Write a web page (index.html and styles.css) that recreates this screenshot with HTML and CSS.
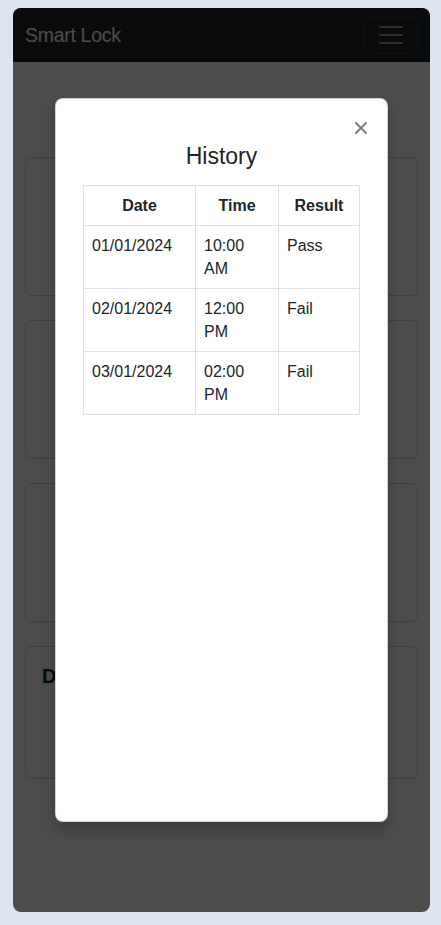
FILE: index.html
```html
<!DOCTYPE html>
<html lang="en">
<head>
<meta charset="utf-8">
<title>Smart Lock</title>
<link rel="stylesheet" href="styles.css">
</head>
<body>
<div class="app">
  <nav class="navbar">
    <span class="brand">Smart Lock</span>
    <button class="toggler" type="button" aria-label="Menu">
      <svg width="30" height="30" viewBox="0 0 30 30"><path d="M4 7h22M4 15h22M4 23h22" stroke="rgba(255,255,255,0.55)" stroke-width="2" stroke-linecap="round"/></svg>
    </button>
  </nav>
  <main class="content">
    <section class="card"></section>
    <section class="card"></section>
    <section class="card"></section>
    <section class="card card-last"><h5 class="card-title">Door Lock</h5></section>
  </main>
  <div class="backdrop">
    <div class="modal">
      <div class="modal-top">
        <button class="close" type="button" aria-label="Close">
          <svg width="12" height="12" viewBox="0 0 12 12"><path d="M1 1L11 11M11 1L1 11" stroke="#000" stroke-width="2" stroke-linecap="square"/></svg>
        </button>
      </div>
      <h4 class="modal-title">History</h4>
      <div class="modal-body">
        <table class="history">
          <colgroup><col class="c-date"><col class="c-time"><col class="c-result"></colgroup>
          <thead>
            <tr><th>Date</th><th>Time</th><th>Result</th></tr>
          </thead>
          <tbody>
            <tr><td>01/01/2024</td><td>10:00 AM</td><td>Pass</td></tr>
            <tr><td>02/01/2024</td><td>12:00 PM</td><td>Fail</td></tr>
            <tr><td>03/01/2024</td><td>02:00 PM</td><td>Fail</td></tr>
          </tbody>
        </table>
      </div>
    </div>
  </div>
</div>
</body>
</html>
```

FILE: styles.css
```css
* { box-sizing: border-box; }
html, body { margin: 0; }
body {
  background: #dce4f0;
  padding: 8px 11px 13px 13px;
  font-family: "Liberation Sans", Arial, sans-serif;
  color: #212529;
}
.app {
  position: relative;
  height: 904px;
  background: #fff;
  border-radius: 8px;
  overflow: hidden;
}
.navbar {
  height: 54px;
  background: #212529;
  display: flex;
  align-items: center;
  justify-content: space-between;
  padding: 0 12px;
}
.brand {
  color: #fff;
  font-size: 19.5px;
  letter-spacing: -0.3px;
}
.toggler {
  width: 54px;
  height: 38px;
  padding: 0;
  background: transparent;
  border: 1px solid rgba(255,255,255,0.1);
  border-radius: 6px;
  display: flex;
  align-items: center;
  justify-content: center;
}
.toggler svg { display: block; }
.content {
  padding: 95px 12px 0;
  display: flex;
  flex-direction: column;
  gap: 24px;
}
.card {
  height: 139px;
  border: 1px solid rgba(0,0,0,0.175);
  border-radius: 6px;
  padding: 16px;
}
.card-last { height: 133px; }
.card-title {
  margin: 0;
  font-size: 20px;
  font-weight: 700;
  line-height: 1.2;
  padding-top: 1px;
}
.backdrop {
  position: absolute;
  inset: 0;
  background: rgba(0,0,0,0.7);
  display: flex;
  justify-content: center;
  align-items: flex-start;
  padding-top: 90px;
}
.modal {
  width: 333px;
  height: 724px;
  background: #fff;
  border: 1px solid rgba(0,0,0,0.175);
  border-radius: 8px;
  box-shadow: 0 8px 16px rgba(0,0,0,0.2);
  display: flex;
  flex-direction: column;
}
.modal-top {
  display: flex;
  justify-content: flex-end;
  padding: 19px 16px 0 0;
}
.close {
  width: 20px;
  height: 20px;
  padding: 4px;
  border: 0;
  background: transparent;
  opacity: 0.5;
  display: flex;
}
.close svg { display: block; }
.modal-title {
  margin: 4px 0 14px;
  text-align: center;
  font-size: 23px;
  font-weight: 500;
  line-height: 1.25;
}
.modal-body {
  padding: 0 27px;
}
.history {
  width: 276px;
  table-layout: fixed;
  border-collapse: collapse;
  font-size: 16px;
  line-height: 23px;
}
.c-date { width: 112px; }
.c-time { width: 83px; }
.c-result { width: 81px; }
.history th, .history td {
  border: 1px solid #dee2e6;
  padding: 8px;
  vertical-align: top;
}
.history th {
  font-weight: 700;
  text-align: center;
}
.history td { text-align: left; }
```
